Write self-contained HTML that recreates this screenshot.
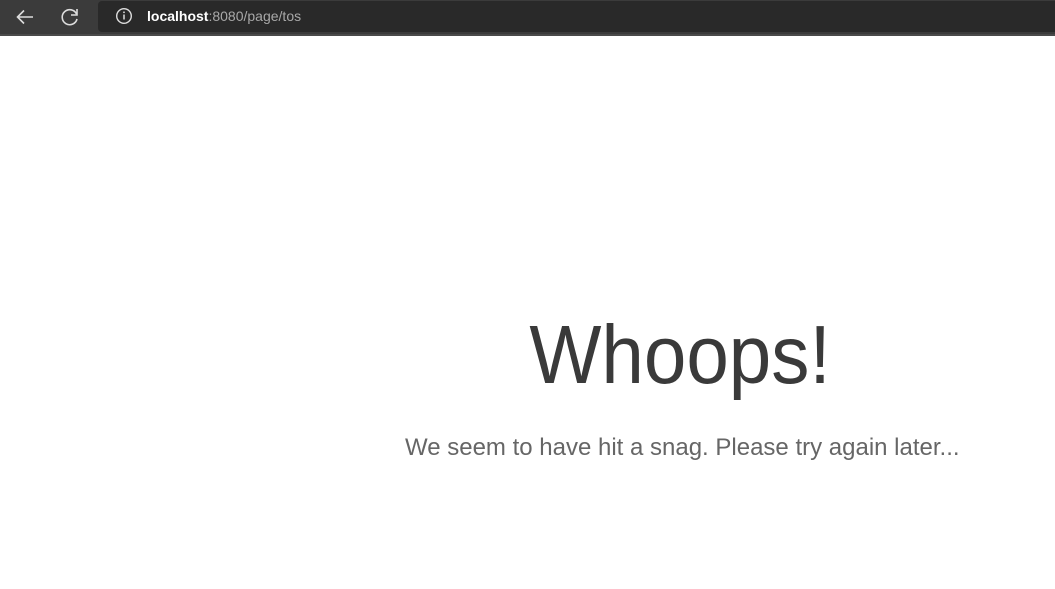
<!DOCTYPE html>
<html><head><style>
body{margin:0;width:1055px;height:589px;background:#fff;overflow:hidden;font-family:"Liberation Sans",sans-serif;position:relative}
.bar{position:absolute;left:0;top:0;width:1055px;height:34px;background:#3b3b3b;border-bottom:2px solid #4a4a4a}
.url{position:absolute;left:98px;top:1px;right:0;height:31px;background:#292929;border-radius:4px 0 0 4px}
.u{position:absolute;left:147px;top:8px;font-size:14px;color:#a8a8a8}
.u b{color:#fff;font-weight:bold}
h1{position:absolute;left:0;width:1360px;text-align:center;top:305px;margin:0;font-weight:300;font-size:83px;line-height:100px;color:#3a3a3a;transform:scaleX(0.92);transform-origin:680px 0}
p{position:absolute;left:405px;top:432px;margin:0;font-size:24px;line-height:32px;color:#666;white-space:nowrap;font-weight:300}
</style></head><body>
<div class="bar"><div class="url"></div>
<svg style="position:absolute;left:14px;top:7px" width="22" height="20" viewBox="0 0 22 20"><path d="M19 10H4M10 3.5L3.5 10 10 16.5" fill="none" stroke="#ddd" stroke-width="1.6"/></svg>
<svg style="position:absolute;left:59px;top:6px" width="22" height="22" viewBox="0 0 22 22"><path d="M17.5 8A7.5 7.5 0 1 0 18 13" fill="none" stroke="#ddd" stroke-width="1.6"/><path d="M18 3v6h-6" fill="none" stroke="#ddd" stroke-width="1.6"/></svg>
<svg style="position:absolute;left:115px;top:7px" width="18" height="18" viewBox="0 0 18 18"><circle cx="9" cy="9" r="7.3" fill="none" stroke="#ddd" stroke-width="1.4"/><path d="M9 7.5v5" stroke="#ddd" stroke-width="1.5"/><circle cx="9" cy="5.3" r="0.9" fill="#ddd"/></svg>
<div class="u"><b>localhost</b>:8080/page/tos</div>
</div>
<h1>Whoops!</h1>
<p>We seem to have hit a snag. Please try again later...</p>
</body></html>
